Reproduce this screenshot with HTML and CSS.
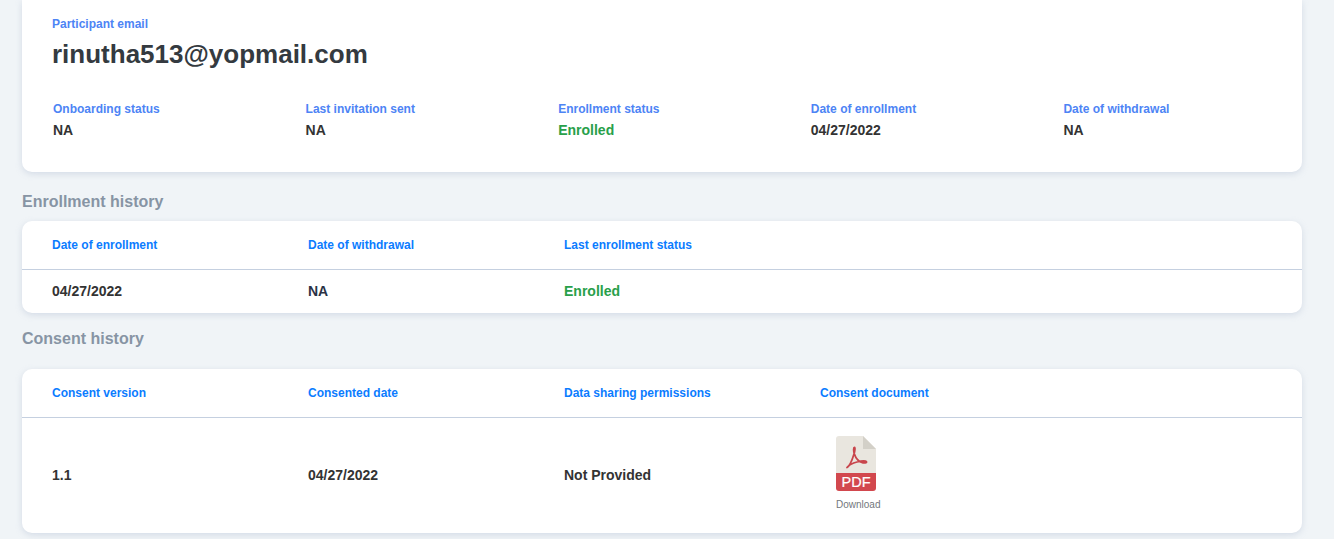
FILE: index.html
```html
<!DOCTYPE html>
<html lang="en">
<head>
<meta charset="utf-8">
<title>Participant details</title>
<link rel="stylesheet" href="styles.css">
</head>
<body>
<main class="page">
  <section class="card summary">
    <div class="email-label">Participant email</div>
    <div class="email">rinutha513@yopmail.com</div>
    <div class="stats">
      <div class="stat"><div class="stat-label">Onboarding status</div><div class="value">NA</div></div>
      <div class="stat"><div class="stat-label">Last invitation sent</div><div class="value">NA</div></div>
      <div class="stat"><div class="stat-label">Enrollment status</div><div class="value green">Enrolled</div></div>
      <div class="stat"><div class="stat-label">Date of enrollment</div><div class="value">04/27/2022</div></div>
      <div class="stat"><div class="stat-label">Date of withdrawal</div><div class="value">NA</div></div>
    </div>
  </section>

  <h2 class="section-title first">Enrollment history</h2>
  <section class="card table">
    <div class="row head head-enroll">
      <div class="th">Date of enrollment</div>
      <div class="th">Date of withdrawal</div>
      <div class="th">Last enrollment status</div>
    </div>
    <div class="row body-enroll">
      <div class="value">04/27/2022</div>
      <div class="value navy">NA</div>
      <div class="value green">Enrolled</div>
    </div>
  </section>

  <h2 class="section-title second">Consent history</h2>
  <section class="card table">
    <div class="row head head-consent">
      <div class="th">Consent version</div>
      <div class="th">Consented date</div>
      <div class="th">Data sharing permissions</div>
      <div class="th">Consent document</div>
    </div>
    <div class="row body-consent">
      <div class="value">1.1</div>
      <div class="value">04/27/2022</div>
      <div class="value">Not Provided</div>
      <div class="doc">
        <svg class="pdf" width="40" height="55" viewBox="0 0 40 55" aria-hidden="true">
          <path d="M3 0H27L40 13V37H0V3A3 3 0 0 1 3 0Z" fill="#e9e6df"/>
          <path d="M27 0L40 13H27Z" fill="#d3d0c8"/>
          <path d="M0 37H40V52A3 3 0 0 1 37 55H3A3 3 0 0 1 0 52Z" fill="#d2484e"/>
          <path d="M11 31.5C13 30.5 16 24.5 18 18C19 14.5 19.3 11.5 18.4 11.5C17.4 11.5 17.4 14.5 18.4 18C20 23 23.5 26 27 26.8C29.5 27.3 31 26.6 30.4 25.7C29.7 24.9 25 25 21 26C17 27 12.5 29.5 11 31.5Z" fill="none" stroke="#c8454c" stroke-width="1.8" stroke-linejoin="round"/>
          <text class="pdf-text" x="20" y="51" text-anchor="middle">PDF</text>
        </svg>
        <span class="download">Download</span>
      </div>
    </div>
  </section>
</main>
</body>
</html>
```
FILE: styles.css
```css
* { box-sizing: border-box; }
html, body { margin: 0; height: 100%; overflow: hidden; }
body {
  background: #f0f4f7;
  font-family: "Liberation Sans", Arial, sans-serif;
  color: #333;
}
.page { padding: 0 32px 0 22px; }
.card {
  background: #fff;
  border-radius: 10px;
  box-shadow: 0 2px 6px rgba(160, 175, 200, 0.35);
}
.summary {
  height: 172px;
  border-radius: 0 0 10px 10px;
  padding: 17px 0 0 30px;
}
.email-label {
  font-size: 12px;
  line-height: 14px;
  font-weight: 700;
  color: #4d84f5;
}
.email {
  font-size: 26px;
  line-height: 28px;
  font-weight: 700;
  margin-top: 9px;
  color: #343a40;
}
.stats {
  display: grid;
  grid-template-columns: repeat(5, 252.6px);
  margin: 34px 0 0 1px;
}
.stat-label {
  font-size: 12px;
  line-height: 14px;
  font-weight: 700;
  color: #4d84f5;
  margin-bottom: 7px;
}
.value {
  font-size: 14px;
  line-height: 15px;
  font-weight: 700;
  color: #333;
}
.green { color: #28a04a; }
.navy { color: #2b3245; }
.section-title {
  margin: 0;
  font-size: 16px;
  line-height: 20px;
  font-weight: 700;
  color: #8794a4;
}
.section-title.first { padding: 20px 0 9px; }
.section-title.second { padding: 16px 0 20px; }
.row {
  display: grid;
  grid-template-columns: 256px 256px 256px 1fr;
  align-items: center;
  padding-left: 30px;
}
.head { border-bottom: 1px solid #c5d0e0; }
.head-enroll { height: 49px; }
.body-enroll { height: 43px; }
.head-consent { height: 49px; }
.body-consent { height: 115px; }
.th {
  font-size: 12px;
  line-height: 14px;
  font-weight: 700;
  color: #0b7cff;
}
.doc {
  display: flex;
  flex-direction: column;
  align-items: flex-start;
  padding: 0 0 5px 16px;
}
.pdf { display: block; }
.pdf-text {
  font-family: "Liberation Sans", Arial, sans-serif;
  font-size: 14.5px;
  fill: #fff;
  stroke: #fff;
  stroke-width: 0.2px;
}
.download {
  font-size: 10px;
  line-height: 11px;
  color: #73777c;
  margin-top: 8px;
}
```
